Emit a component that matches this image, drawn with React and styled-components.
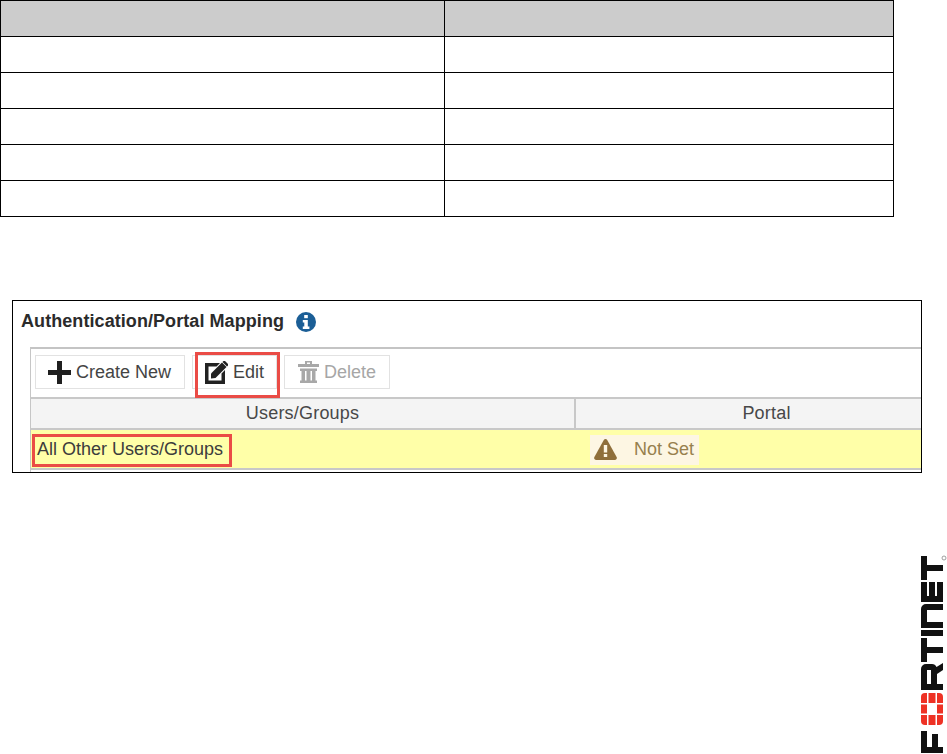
import React from 'react'
import styled, { createGlobalStyle } from 'styled-components'

const Global = createGlobalStyle`
  html, body { margin: 0; padding: 0; background: #fff; }
  body { font-family: "Liberation Sans", Arial, sans-serif; }
`

const Page = styled.div`
  width: 947px;
  height: 754px;
  overflow: hidden;
  display: flex;
  flex-direction: column;
`

// blank table at the top of the page
const DocTable = styled.table`
  width: 893px;
  border-collapse: collapse;
  table-layout: fixed;
  border-left: 1px solid #000;
  border-right: 1px solid #000;
`
const Col = styled.col`
  width: ${props => props.$w}px;
`
const Cell = styled.td`
  height: 35px;
  padding: 0;
  background: ${props => props.$head ? '#cccccc' : '#fff'};
  border-top: 1px solid #000;
  border-bottom: 1px solid #000;
  & + & { border-left: 1px solid #000; }
`

const Panel = styled.div`
  box-sizing: border-box;
  width: 910px;
  height: 173px;
  margin: 83px 0 0 12px;
  border: 1px solid #000;
  padding-left: 17px;
  display: flex;
  flex-direction: column;
`
const TitleRow = styled.div`
  height: 46px;
  margin-left: -9px;
  padding-bottom: 5px;
  box-sizing: border-box;
  display: flex;
  align-items: center;
  gap: 12px;
`
const Title = styled.h2`
  margin: 0;
  font-size: 18px;
  font-weight: 700;
  letter-spacing: 0.07px;
  color: #2b2b2b;
`
const Frame = styled.div`
  flex: 1;
  border-left: 1px solid #c6c6c6;
  border-top: 2px solid #c4c4c4;
  display: flex;
  flex-direction: column;
`
const Toolbar = styled.div`
  height: 48px;
  box-sizing: border-box;
  padding: 6px 0 0 4px;
  display: flex;
  gap: 7px;
`
const ToolButton = styled.div`
  box-sizing: border-box;
  height: 34px;
  width: ${props => props.$w}px;
  border: 1px solid #e2e2e2;
  display: flex;
  align-items: center;
  gap: 5px;
  padding-left: ${props => props.$pad}px;
  font-size: 18px;
  color: ${props => props.$off ? '#a6a6a6' : '#444'};
  background: #fff;
`
const Marked = styled.div`
  position: relative;
  &::after {
    content: '';
    position: absolute;
    box-sizing: border-box;
    border: 3px solid #ea4c46;
    pointer-events: none;
    left: ${props => props.$l}px;
    top: ${props => props.$t}px;
    width: ${props => props.$w}px;
    height: ${props => props.$h}px;
  }
`
const GridHead = styled.div`
  display: grid;
  grid-template-columns: 543px 1fr;
  height: 33px;
  box-sizing: border-box;
  background: #f4f4f4;
  border-top: 2px solid #c8c8c8;
  border-bottom: 2px solid #c8c8c8;
`
const HeadCell = styled.div`
  display: flex;
  align-items: center;
  justify-content: center;
  font-size: 18px;
  letter-spacing: 0.2px;
  color: #484848;
  padding-left: ${props => props.$pad || 0}px;
  & + & { border-left: 2px solid #c8c8c8; }
`
const GridRow = styled.div`
  display: grid;
  grid-template-columns: 543px 1fr;
  height: 40px;
  box-sizing: border-box;
  background: #ffffa8;
  border-bottom: 2px solid #c8c8c8;
`
const RowCell = styled.div`
  display: flex;
  align-items: center;
  height: 100%;
  padding-top: 1px;
  box-sizing: border-box;
  font-size: 18px;
  color: #3c3c3c;
  padding-left: ${props => props.$pad}px;
  & + & { border-left: 2px solid #ececc0; }
`
const Chip = styled.div`
  box-sizing: border-box;
  width: 109px;
  height: 30px;
  background: #fdf6e3;
  display: flex;
  align-items: center;
  gap: 17px;
  padding-left: 4px;
  color: #97804e;
`

const Footer = styled.div`
  flex: 1;
  display: flex;
  justify-content: flex-end;
  padding: 82px 0 0 0;
`

function InfoIcon() {
  return (
    <svg width="20" height="20" viewBox="0 0 20 20">
      <circle cx="10" cy="10" r="10" fill="#1b5e96" />
      <rect x="8.2" y="3" width="3.6" height="3.2" fill="#fff" />
      <path d="M6.8 8h5v6.4h1.6V17H6.8v-2.6h1.5v-3.8H6.8z" fill="#fff" />
    </svg>
  )
}

function PlusIcon() {
  return (
    <svg width="23" height="23" viewBox="0 0 23 23">
      <path d="M9 0h5v9h9v5h-9v9H9v-9H0V9h9z" fill="#1f1f1f" />
    </svg>
  )
}

function EditIcon() {
  return (
    <svg width="23" height="23" viewBox="0 0 23 23">
      <path d="M0 2h15l-3.500 3.500H3.500v14h13v-7L20 9v14H0z" fill="#222" />
      <path d="M6 12.500 17 1.500 21.500 6 10.500 17 6 17.500z" fill="#222" />
      <path d="M18.500 0 20 0l3 3v1.500l-1 1-4.500-4.500z" fill="#222" />
    </svg>
  )
}

function TrashIcon() {
  return (
    <svg width="21" height="22" viewBox="0 0 21 22">
      <path d="M7 0h7v3h7v3H0V3h7zM9 1.500V3h3V1.500z" fill="#a8a8a8" fillRule="evenodd" />
      <path d="M2 7.500h17V10h-1.500v9.500H19V22H2v-2.500h1.500V10H2z" fill="#a8a8a8" />
      <path d="M7 10h1.500v9.500H7zM12.500 10H14v9.500h-1.500z" fill="#fff" />
    </svg>
  )
}

function WarnIcon() {
  return (
    <svg width="23" height="21" viewBox="0 0 23 21">
      <path d="M11.500 0c.8 0 1.300.4 1.700 1.100l9.400 17c.7 1.300-.1 2.900-1.700 2.900H2.100C.5 21-.3 19.400.4 18.100l9.400-17C10.200.4 10.700 0 11.500 0z" fill="#8f6f3b" />
      <rect x="9.800" y="6" width="3.400" height="7.500" fill="#fdf6e3" />
      <rect x="9.800" y="15" width="3.400" height="3" fill="#fdf6e3" />
    </svg>
  )
}

// logo runs bottom to top, drawn flat then turned
function FortinetLogo() {
  const k = '#111'
  const r = '#ee3124'
  return (
    <svg width="26" height="198" viewBox="0 0 26 198">
      <g transform="translate(0 198) rotate(-90)">
        {/* F */}
        <path d="M0 0h22v6H6v5h13v6H6v5H0z" fill={k} />
        {/* O, red squares */}
        <path d="M28 4a4 4 0 0 1 4-4h6v6H28z" fill={r} />
        <rect x="39.500" y="0" width="9" height="6" fill={r} />
        <path d="M50 0h6a4 4 0 0 1 4 4v2H50z" fill={r} />
        <rect x="28" y="7.500" width="10" height="7" fill={r} />
        <rect x="50" y="7.500" width="10" height="7" fill={r} />
        <path d="M28 16h10v6h-6a4 4 0 0 1-4-4z" fill={r} />
        <rect x="39.500" y="16" width="9" height="6" fill={r} />
        <path d="M50 16h10v2a4 4 0 0 1-4 4h-6z" fill={r} />
        {/* R */}
        <path d="M63 0h21a5 5 0 0 1 5 5v6a5 5 0 0 1-3 4.500L90 22h-7l-4-6H69v6h-6zm6 6v4h14V6z" fill={k} fillRule="evenodd" />
        {/* T */}
        <path d="M91 0h24v6h-9v16h-6V6h-9z" fill={k} />
        {/* I */}
        <rect x="117" y="0" width="6" height="22" fill={k} />
        {/* N */}
        <path d="M125 0h19a5 5 0 0 1 5 5v17h-6V6h-12v16h-6z" fill={k} />
        {/* E */}
        <path d="M151 0h20v6h-14v2h14v6h-14v2h14v6h-20z" fill={k} />
        {/* T */}
        <path d="M173 0h24v6h-9v16h-6V6h-9z" fill={k} />
      </g>
      <circle cx="23" cy="3" r="2" fill="none" stroke="#888" strokeWidth="0.8" />
    </svg>
  )
}

const rows = [0, 1, 2, 3, 4]

export default function App() {
  return (
    <Page>
      <Global />
      <DocTable>
        <colgroup>
          <Col $w={444} />
          <Col $w={449} />
        </colgroup>
        <tbody>
          <tr><Cell $head /><Cell $head /></tr>
          {rows.map(i => (
            <tr key={i}><Cell /><Cell /></tr>
          ))}
        </tbody>
      </DocTable>

      <Panel>
        <TitleRow>
          <Title>Authentication/Portal Mapping</Title>
          <InfoIcon />
        </TitleRow>
        <Frame>
          <Marked $l={164} $t={3} $w={85} $h={46}>
            <Toolbar>
              <ToolButton $w={150} $pad={12}><PlusIcon />Create New</ToolButton>
              <ToolButton $w={85} $pad={12}><EditIcon />Edit</ToolButton>
              <ToolButton $w={106} $pad={13} $off><TrashIcon />Delete</ToolButton>
            </Toolbar>
          </Marked>
          <GridHead>
            <HeadCell>Users/Groups</HeadCell>
            <HeadCell $pad={36}>Portal</HeadCell>
          </GridHead>
          <GridRow>
            <Marked $l={1} $t={4} $w={200} $h={33}>
              <RowCell $pad={6}>All Other Users/Groups</RowCell>
            </Marked>
            <RowCell $pad={16}>
              <Chip><WarnIcon />Not Set</Chip>
            </RowCell>
          </GridRow>
        </Frame>
      </Panel>

      <Footer>
        <FortinetLogo />
      </Footer>
    </Page>
  )
}
